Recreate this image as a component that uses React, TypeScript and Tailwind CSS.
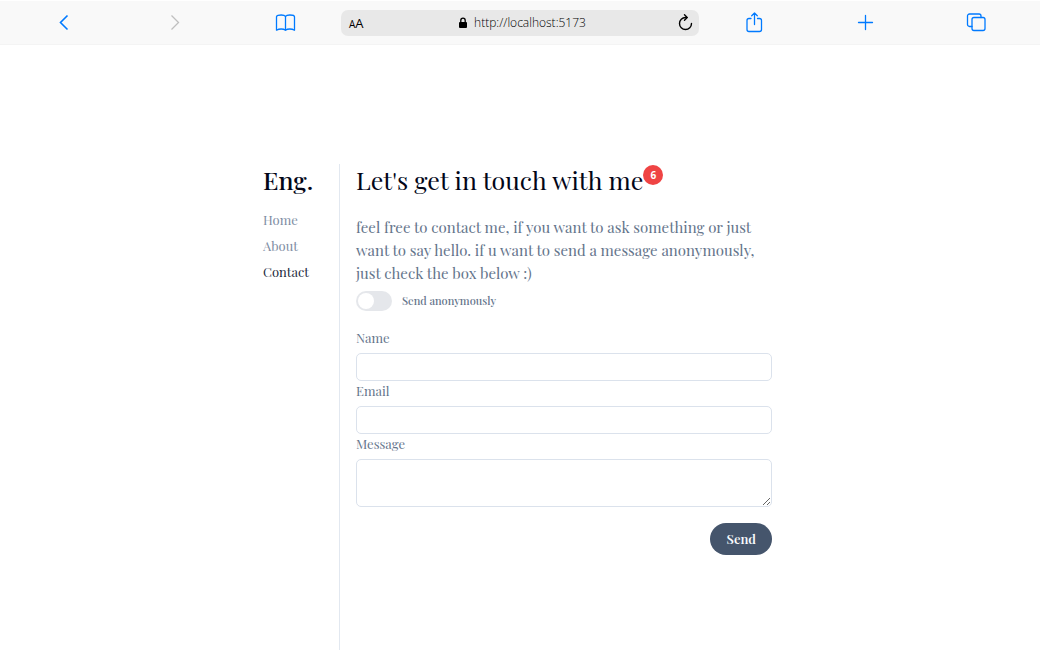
import type { ReactNode } from "react";

function ToolbarButton({ label, muted, children }: { label: string; muted?: boolean; children: ReactNode }) {
  return (
    <button
      type="button"
      aria-label={label}
      className={
        muted
          ? "flex h-6 w-6 items-center justify-center justify-self-center text-[#bfbfbf]"
          : "flex h-6 w-6 items-center justify-center justify-self-center text-[#007aff]"
      }
    >
      <svg
        viewBox="0 0 24 24"
        className="h-6 w-6 shrink-0"
        fill="none"
        stroke="currentColor"
        strokeWidth="1.3"
        strokeLinecap="round"
        strokeLinejoin="round"
      >
        {children}
      </svg>
    </button>
  );
}

function Toolbar() {
  return (
    <header className="mt-px grid h-11 grid-cols-[1fr_1fr_1fr_minmax(0,358px)_1fr_1fr_1fr] items-center border-b border-[#f4f4f4] bg-[#f9f9f9] px-2 font-['Open_Sans',sans-serif]">
      <ToolbarButton label="Back">
        <path d="M15.500 4.500 8.500 11.500l7 7" strokeWidth="1.6" strokeLinecap="butt" strokeLinejoin="miter" />
      </ToolbarButton>
      <ToolbarButton label="Forward" muted>
        <path d="m8.500 4.500 7 7-7 7" strokeLinecap="butt" strokeLinejoin="miter" />
      </ToolbarButton>
      <ToolbarButton label="Bookmarks">
        <path d="M11.500 5.500C10.700 4.200 9.100 4 7.200 4 4.800 4 2.500 4.300 2.500 5.800v13.400c1.300-.8 2.900-1.200 4.700-1.200s3.200.4 4.300 1.300c1.100-.9 2.500-1.300 4.300-1.300s3.400.4 4.700 1.200V5.800C20.500 4.300 18.200 4 15.800 4c-1.900 0-3.500.2-4.300 1.500Zm0 0v13.500" />
      </ToolbarButton>
      <div className="flex h-[26px] items-center justify-between rounded-[7px] bg-[#e8e8e8] pr-1.5 pl-2 text-black">
        <button type="button" aria-label="Text size" className="flex w-5 items-baseline pt-0.5 leading-4">
          <span className="text-[10px]">A</span>
          <span className="text-[13px]">A</span>
        </button>
        <div className="flex items-center gap-1.5 pl-0.5">
          <svg viewBox="0 0 10 12" className="h-3 w-2.5" aria-hidden="true">
            <rect x="1" y="5" width="8" height="6" rx="1" fill="currentColor" />
            <path d="M2.800 5.500V3.400a2.200 2.200 0 0 1 4.400 0v2.100" fill="none" stroke="currentColor" strokeWidth="1.300" />
          </svg>
          <span className="text-xs leading-4 font-light">http://localhost:5173</span>
        </div>
        <button type="button" aria-label="Reload" className="flex w-5 justify-end">
          <svg viewBox="0 0 16 18" className="h-[18px] w-4" fill="none" stroke="currentColor" strokeWidth="1.400">
            <path d="M14.500 9.500A6 6 0 1 1 8.500 3.500h1.300" strokeLinecap="round" />
            <path d="M7.500.8l2.700 2.700-2.700 2.700" strokeLinecap="round" strokeLinejoin="round" />
          </svg>
        </button>
      </div>
      <ToolbarButton label="Share">
        <path d="M8 7.500H6a2 2 0 0 0-2 2v9a2 2 0 0 0 2 2h10.500a2 2 0 0 0 2-2v-9a2 2 0 0 0-2-2h-2M11.500 13.500V2.500M8.700 4.800 11.500 2l2.800 2.800" />
      </ToolbarButton>
      <ToolbarButton label="New tab">
        <path d="M11.500 4.500v14M4.500 11.500h14" />
      </ToolbarButton>
      <ToolbarButton label="Tabs">
        <rect x="7" y="6.500" width="13" height="13" rx="2" />
        <path d="M7 15.500H4.500a2 2 0 0 1-2-2V5a2 2 0 0 1 2-2H14a2 2 0 0 1 2 2v1.500" />
      </ToolbarButton>
    </header>
  );
}

function Field({ id, label, children }: { id: string; label: string; children: ReactNode }) {
  return (
    <div className="flex flex-col gap-[5px]">
      <label htmlFor={id} className="text-[13px] leading-5">
        {label}
      </label>
      {children}
    </div>
  );
}

export default function App() {
  return (
    <div className="flex min-h-screen flex-col bg-white font-['Playfair_Display','Liberation_Serif',serif] text-[#64748b]">
      <Toolbar />
      <div className="mx-auto flex w-full max-w-[514px] flex-1 pt-[119px] pr-[5px]">
        <aside className="w-[77px] shrink-0 border-r border-slate-200">
          <p className="text-[25px] leading-8 font-medium text-slate-950">Eng.</p>
          <nav className="mt-[11px] flex flex-col items-start text-[13px] leading-[26px] text-[#7e8da3]">
            <a href="#home">Home</a>
            <a href="#about">About</a>
            <a href="#contact" className="text-slate-800">
              Contact
            </a>
          </nav>
        </aside>
        <main className="min-w-0 flex-1 pl-4">
          <div className="flex items-start">
            <h1 className="text-[25px] leading-8 text-slate-950">Let's get in touch with me</h1>
            <span className="mt-px flex h-5 w-5 items-center justify-center rounded-full bg-[#ef4444] font-['Open_Sans',sans-serif] text-[10px] font-bold text-white">
              6
            </span>
          </div>
          <p className="mt-5 text-[15px] leading-[23px]">
            feel free to contact me, if you want to ask something or just want to say hello. if u want to send a
            message anonymously, just check the box below :)
          </p>
          <form>
            <label className="mt-1.5 flex items-center gap-2.5 text-[11px] leading-5">
              <input
                type="checkbox"
                role="switch"
                className="h-5 w-9 appearance-none rounded-full bg-gray-200 p-0.5 before:block before:h-4 before:w-4 before:rounded-full before:bg-white checked:bg-slate-600 checked:before:translate-x-4"
              />
              <span className="font-medium">Send anonymously</span>
            </label>
            <div className="mt-[17px] flex flex-col">
              <Field id="name" label="Name">
                <input id="name" type="text" className="h-7 rounded-[5px] border border-[#dbe2ec] px-2 text-sm" />
              </Field>
              <Field id="email" label="Email">
                <input id="email" type="email" className="h-7 rounded-[5px] border border-[#dbe2ec] px-2 text-sm" />
              </Field>
              <Field id="message" label="Message">
                <textarea id="message" className="h-12 resize rounded-[5px] border border-[#dbe2ec] px-2 text-sm" />
              </Field>
            </div>
            <div className="mt-4 flex justify-end">
              <button
                type="submit"
                className="rounded-full bg-slate-600 px-4 py-1.5 text-[13px] leading-5 font-semibold text-slate-50"
              >
                Send
              </button>
            </div>
          </form>
        </main>
      </div>
    </div>
  );
}
